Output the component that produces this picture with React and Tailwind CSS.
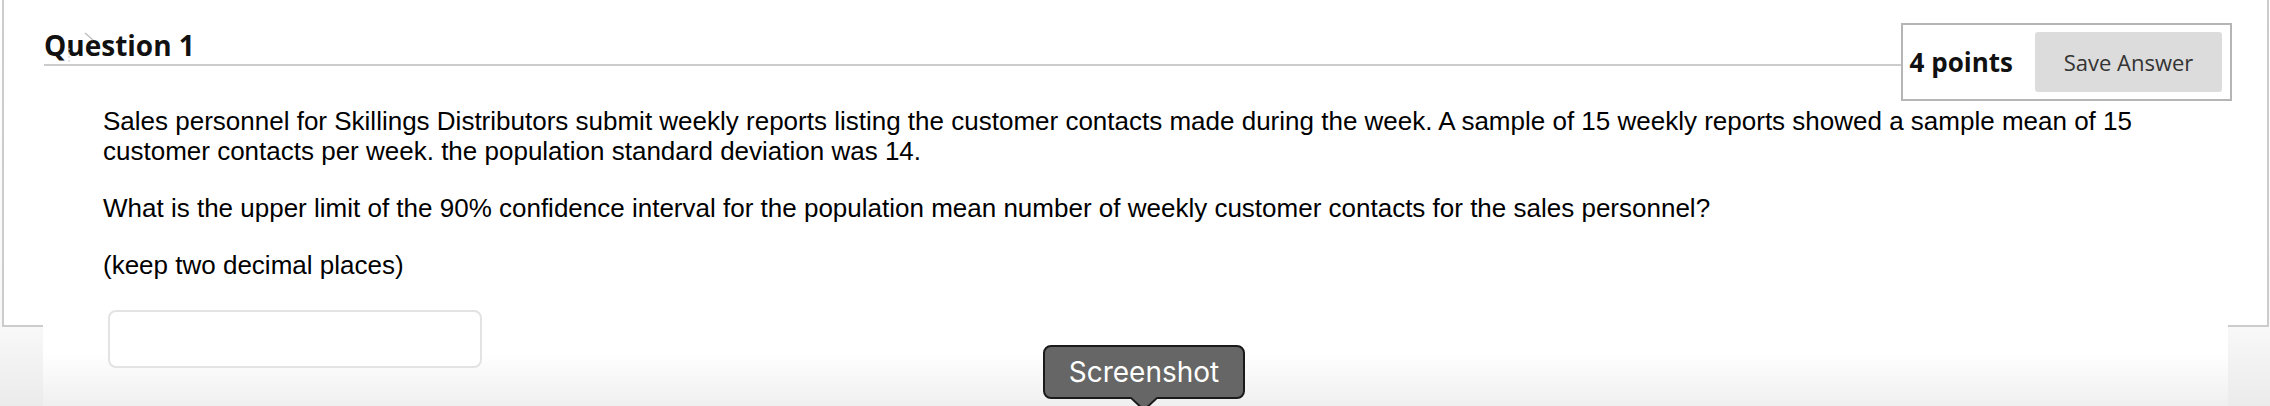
export default function App() {
  return (
    <div className="relative w-[2270px] h-[406px] overflow-hidden bg-[linear-gradient(to_bottom,#ffffff_0px,#f8f8f8_327px,#ebebeb_406px)]">
      {/* question panel */}
      <div className="ml-[2px] w-[2267px] h-[327px] border-x-2 border-b-2 border-[#cccccc] bg-white">
        <div className="flex items-start pl-[40px] pr-[35px]">
          <div className="flex-1 border-b-2 border-[#cccccc] pt-[26px]">
            <h2 className="font-['Open_Sans',sans-serif] text-[28px] leading-[38px] font-bold text-[#111]">Question 1</h2>
          </div>
          <div className="mt-[23px] flex items-center gap-[22px] border-2 border-[#b5b5b5] bg-white py-[7px] pl-[7px] pr-[8px]">
            <span className="font-['Open_Sans',sans-serif] text-[26px] font-bold text-[#111]">4 points</span>
            <button className="w-[187px] h-[60px] rounded-[3px] bg-[#dcdcdc] font-['Open_Sans',sans-serif] text-[22px] text-[#333]">Save Answer</button>
          </div>
        </div>
        <div className="mt-[5px] pl-[99px] w-[2200px] font-['Liberation_Sans',Arial,sans-serif] text-[26px] leading-[30px] text-black flex flex-col gap-[27px]">
          <p>
            Sales personnel for Skillings Distributors submit weekly reports listing the customer contacts made during the week. A sample of 15 weekly reports showed a sample mean of 15 customer contacts per week. the population standard deviation was 14.
          </p>
          <p>What is the upper limit of the 90% confidence interval for the population mean number of weekly customer contacts for the sales personnel?</p>
          <p>(keep two decimal places)</p>
        </div>
      </div>

      {/* answer area */}
      <div className="relative ml-[43px] -mt-[37px] w-[2185px] h-[116px] bg-[linear-gradient(to_bottom,#ffffff_55%,#efefef_100%)] pt-[20px] pl-[65px]">
        <input
          type="text"
          className="w-[374px] h-[58px] rounded-[8px] border-2 border-[#e3e3e3] bg-white outline-none"
        />
      </div>

      {/* cursor remnant near the title */}
      <svg className="absolute left-[64px] top-[30px]" width="34" height="36" viewBox="0 0 34 36">
        <line x1="21" y1="3" x2="29" y2="10" stroke="#bbbbbb" strokeWidth="1.2" />
        <line x1="5" y1="18" x2="5" y2="34" stroke="#c8c8c8" strokeWidth="1" strokeDasharray="2 2" />
      </svg>

      {/* screenshot tooltip */}
      <div className="absolute left-[1043px] top-[345px] w-[202px] h-[54px] rounded-[8px] border-2 border-[#1a1a1a] bg-[#666666] flex items-center justify-center">
        <span className="font-['Inter',sans-serif] text-[28px] text-white">Screenshot</span>
      </div>
      <svg className="absolute left-[1131px] top-[397px]" width="26" height="14" viewBox="0 0 26 14">
        <path d="M0 0 L13 13 L26 0 Z" fill="#666666" />
        <path d="M0 1 L13 13 L26 1" fill="none" stroke="#1a1a1a" strokeWidth="2" />
      </svg>
    </div>
  );
}
